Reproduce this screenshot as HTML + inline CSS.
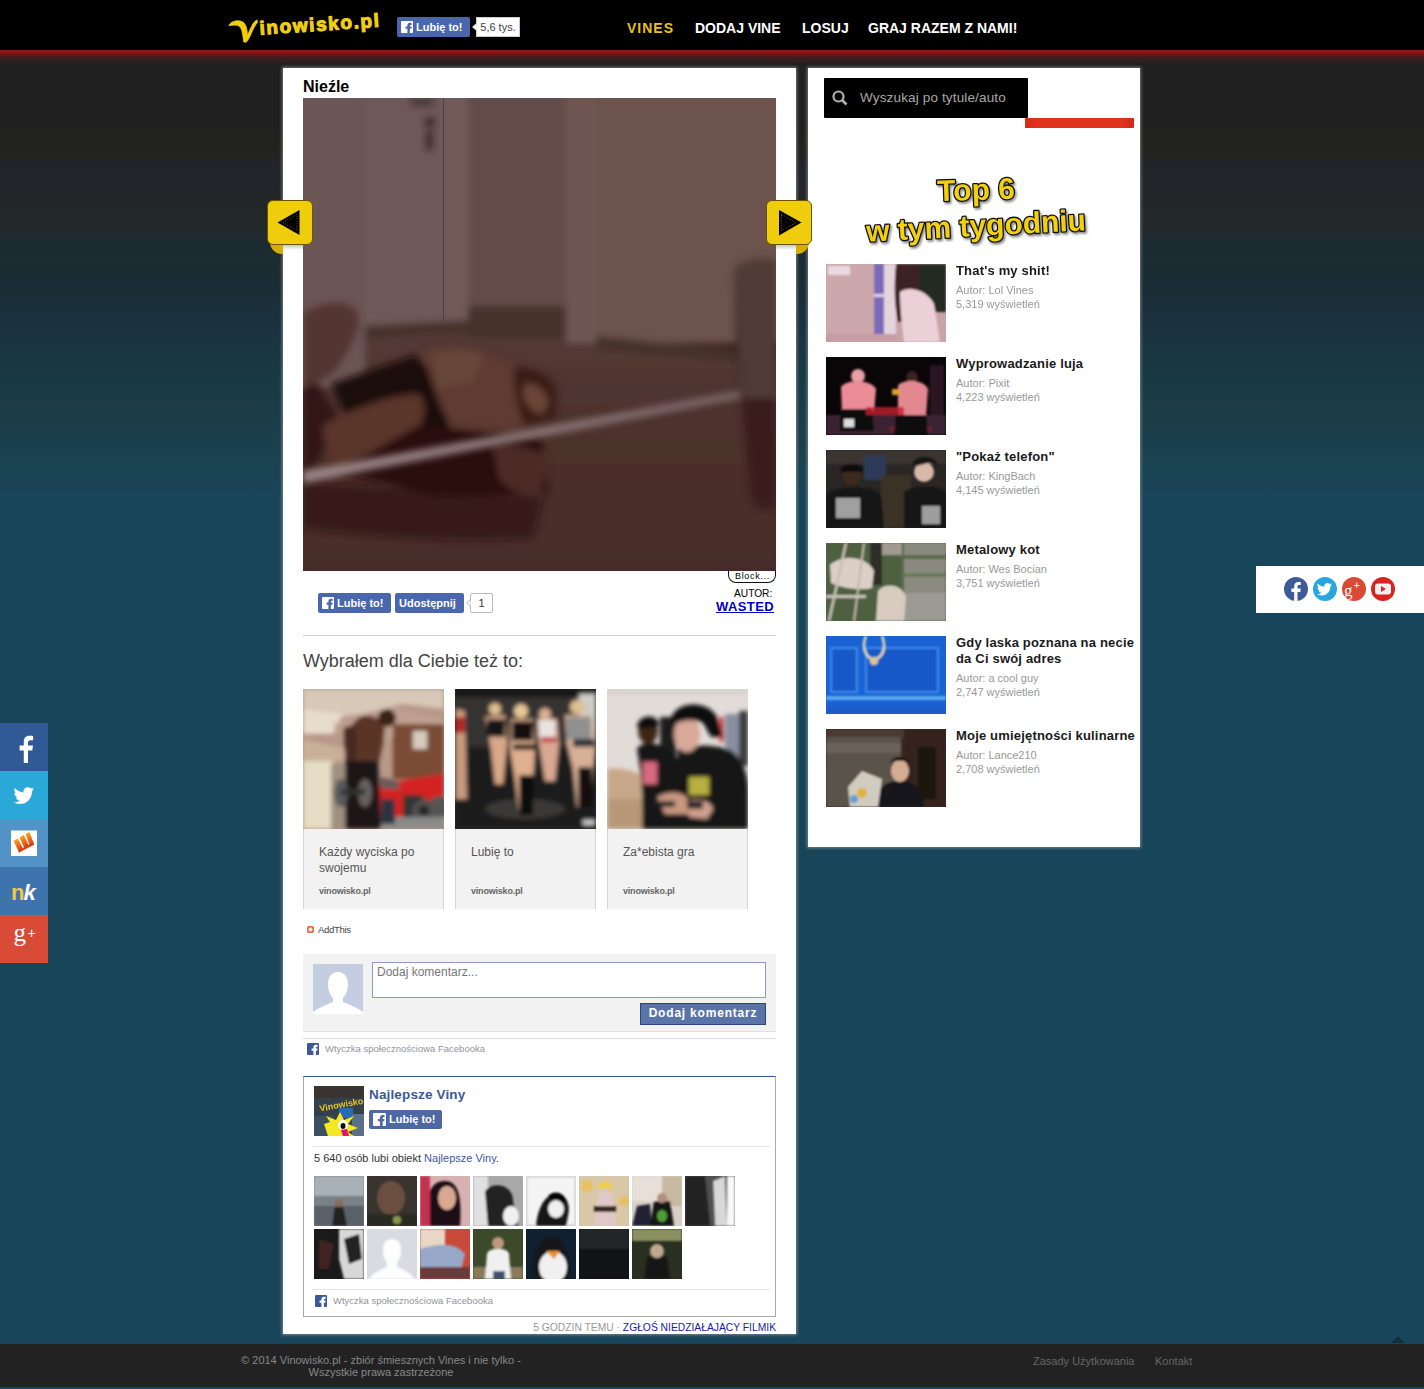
<!DOCTYPE html>
<html><head><meta charset="utf-8">
<style>
*{margin:0;padding:0;box-sizing:border-box}
html,body{width:1424px;height:1389px;overflow:hidden}
body{position:relative;font-family:"Liberation Sans",sans-serif;background:#1a465b;}
.abs{position:absolute}
#bg{position:absolute;left:0;top:0;width:1424px;height:1389px;background:linear-gradient(to bottom,#000 0,#000 49.5px,#8a1a1a 50px,#921010 52px,#7a1414 53.5px,#5a1a1c 55px,#3c1c1e 58px,#2c2220 61px,#232022 63px,#202020 65px,#202020 125px,#232420 159px,#22242a 160px,#222828 231px,#222a30 232px,#1c2b31 240px,#1a2c33 275px,#1a3240 330px,#193943 375px,#1b3d48 420px,#1a4250 460px,#19455a 497px,#19455a 100%)}
#hdr{position:absolute;left:0;top:0;width:1424px;height:50px}
.nav{position:absolute;top:20px;font-weight:bold;font-size:14px;color:#fff;line-height:16px;white-space:nowrap}
.box{position:absolute;background:#fff;box-shadow:0 0 3px 1px rgba(190,190,190,.55)}
.fbbtn{position:absolute;background:#4a66ad;border-radius:2px;color:#fff;font-weight:bold;font-size:11px;line-height:20px;white-space:nowrap}
.fbic{position:absolute;background:#fff;border-radius:1px}
.t{position:absolute;white-space:nowrap}
</style></head><body>
<div id="bg"></div>

<!-- header -->
<div id="hdr">
  <svg class="abs" style="left:220px;top:5px" width="175" height="42" viewBox="220 5 175 42">
<path d="M228.8,25.5 C231,21.5 236,20.2 240,21 C245,22 246.5,26 247.2,32 L247.4,36 C249.5,30 252,24.5 256.8,19.8 L257.6,22 C255,25.5 253,29.5 251,34 C249.5,37.5 248,40.5 246.2,42.2 L243.6,41.8 C243.2,37 242.5,32 241.2,28.8 C240,26 237.5,25 234.5,25.1 C232.5,25.2 230.5,25.6 228.8,25.5 Z" fill="#f0cf10" stroke="#f0cf10" stroke-width="0.8"/>
<path d="M251.2,25.8 C252.5,23.5 254.5,21.5 256.6,19.8 L255.5,23.5 Z" fill="#f0cf10"/>
<text x="260" y="34.7" font-family="Liberation Sans" font-weight="bold" font-size="19" letter-spacing="1.6" fill="#f0cf10" stroke="#f0cf10" stroke-width="1.1" stroke-linejoin="round" transform="rotate(-3.8 260 34.7)">inowisko.pl</text>
</svg>
  <div class="fbbtn" style="left:397px;top:17px;width:73px;height:20px"><svg class="abs" style="left:4px;top:4px" width="12" height="12" viewBox="0 0 12 12"><rect width="12" height="12" rx="1" fill="#fff"/><path d="M6.4,12 V7.7 H4.6 V5.6 H6.4 V4.4 C6.4,2.8 7.3,1.8 8.9,1.8 H10.6 V3.9 H9.4 C9.1,3.9 8.9,4.1 8.9,4.5 V5.6 H10.6 L10.3,7.7 H8.9 V12 Z" fill="#4a66ad"/></svg><span style="position:absolute;left:19px;top:0">Lubię to!</span></div>
  <div class="t" style="left:476px;top:17px;width:44px;height:20px;background:#fff;border:1px solid #ccc;font-size:11px;line-height:18px;color:#444;text-align:center">5,6 tys.</div><svg class="abs" style="left:472px;top:23px" width="5" height="8"><polygon points="5,0 0.5,4 5,8" fill="#fff" stroke="#ccc" stroke-width="1"/></svg>
  <div class="nav" style="left:627px;color:#e8c31c;letter-spacing:1px">VINES</div>
  <div class="nav" style="left:695px">DODAJ VINE</div>
  <div class="nav" style="left:802px">LOSUJ</div>
  <div class="nav" style="left:868px">GRAJ RAZEM Z NAMI!</div>
</div>

<!-- main box -->
<div class="box" style="left:283px;top:68px;width:513px;height:1266px"></div>
<!-- sidebar -->
<div class="box" style="left:808px;top:68px;width:332px;height:779px"></div>


<!-- MAIN CONTENT -->
<div class="t" style="left:303px;top:78px;font-size:16px;font-weight:bold;color:#000;line-height:18px">Nieźle</div>
<div class="abs" id="video" style="left:303px;top:98px;width:473px;height:473px;overflow:hidden;background:#3e221c">
<svg width="473" height="473" viewBox="0 0 473 473">
<defs>
<filter id="bl" x="-20%" y="-20%" width="140%" height="140%"><feGaussianBlur stdDeviation="3.5"/></filter>
<filter id="bl2" x="-30%" y="-30%" width="160%" height="160%"><feGaussianBlur stdDeviation="9"/></filter>
<linearGradient id="barg" x1="0" y1="0" x2="1" y2="0"><stop offset="0" stop-color="#9a8686"/><stop offset="1" stop-color="#7a6666"/></linearGradient>
<linearGradient id="fl" x1="0" y1="0" x2="0" y2="1"><stop offset="0" stop-color="#563c38"/><stop offset="0.5" stop-color="#4c302c"/><stop offset="1" stop-color="#462c2c"/></linearGradient>
</defs>
<rect x="0" y="0" width="473" height="473" fill="#3e221c"/>
<g filter="url(#bl)">
<rect x="-10" y="-10" width="72" height="300" fill="#6c5454"/>
<rect x="62" y="-10" width="81" height="245" fill="#6e5858"/>
<rect x="143" y="-10" width="22" height="238" fill="#725a58"/>
<rect x="165" y="-10" width="98" height="220" fill="#644c48"/>
<rect x="263" y="-10" width="30" height="255" fill="#705652"/>
<rect x="293" y="-10" width="190" height="255" fill="#6c524e"/>
<polygon points="-10,290 62,290 62,235 165,228 165,208 263,208 263,245 293,245 293,240 480,262 480,480 -10,480" fill="url(#fl)"/>
<polygon points="62,228 165,222 165,235 62,240" fill="#46302c"/>
<polygon points="165,208 263,208 263,240 165,240" fill="#45302a"/>
<polygon points="293,238 430,252 480,255 480,268 293,252" fill="#45302a"/>
</g>
<rect x="140" y="0" width="1" height="228" fill="#524040"/>
<g filter="url(#bl)">
<rect x="108" y="2" width="22" height="4" fill="#2a1c1c"/>
<circle cx="127" cy="24" r="5" fill="#3a2222"/>
<rect x="124" y="32" width="5" height="20" fill="#2a1a1a"/>
</g>
<g filter="url(#bl2)">


</g>
<g filter="url(#bl)">
<path d="M0,215 C15,205 45,200 54,214 C60,230 45,255 30,275 L14,285 L0,290 Z" fill="#533630"/>
<path d="M0,290 L14,285 C25,300 32,315 38,325 L10,370 L0,372 Z" fill="#321614"/>
<path d="M28,286 L112,257 L150,298 L142,345 L46,326 Z" fill="#1c0c0c"/>
<path d="M122,252 C145,246 170,248 185,256 C215,265 240,280 250,300 L245,318 L204,334 L150,330 C140,315 132,295 122,262 Z" fill="#5e3a32"/>
<path d="M128,256 C145,250 165,250 180,258 L170,285 L136,290 Z" fill="#684638"/>
<path d="M211,269 C230,268 248,276 254,292 L252,320 L221,327 C214,312 210,290 211,269 Z" fill="#3a1c18"/>
<path d="M222,286 C232,284 242,292 246,304 L240,316 C230,316 222,306 220,296 Z" fill="#6a4438"/>
<path d="M20,327 C50,310 90,296 116,296 C124,305 122,320 116,330 L34,370 C25,360 20,345 20,327 Z" fill="#5a3429"/>
<path d="M116,327 L238,340 L245,395 L136,398 L34,374 Z" fill="#2a0e0c"/>
<path d="M190,347 C210,345 240,352 245,360 L238,395 C220,398 204,392 196,380 Z" fill="#4e2c26"/>
<path d="M0,385 C60,388 140,392 240,400 L230,440 C160,445 80,440 0,430 Z" fill="#2e1614" opacity="0.7"/>
<path d="M431,172 C436,160 473,158 473,165 L473,408 C462,415 452,410 448,398 L433,250 Z" fill="#3a1c1a"/>
<path d="M431,172 C436,160 473,158 473,165 L473,300 L438,300 Z" fill="#503a36"/>
</g>
<g filter="url(#bl)">
<path d="M0,373 L436,293 L438,300 L0,385 Z" fill="url(#barg)"/>
</g>
</svg>
</div>
<div class="abs" style="left:728px;top:571px;width:48px;height:12px;background:#fff;border:1.5px solid #111;border-top:none;border-radius:0 0 8px 8px;font-size:9px;line-height:10px;letter-spacing:0.7px;text-align:center;color:#000;padding-left:1px">Block...</div>

<!-- prev/next -->
<div class="abs" style="left:270px;top:240px;width:13px;height:14px;background:#d6ad00;border-radius:0 0 0 12px"></div>
<div class="abs" style="left:283px;top:244px;width:20px;height:6px;background:linear-gradient(#bbb,#fff)"></div>
<div class="abs" style="left:267px;top:200px;width:46px;height:45px;background:#f0cd0c;border:1px solid #6a5400;border-radius:6px"></div>
<svg class="abs" style="left:267px;top:200px" width="46" height="45"><polygon points="10.5,22.5 32.5,10 32.5,35" fill="#000"/><polygon points="16,22.5 30,14.5 30,30.5" fill="#000" stroke="#6a5a10" stroke-width="1" stroke-dasharray="1,1.5"/></svg>
<div class="abs" style="left:796px;top:240px;width:13px;height:14px;background:#d6ad00;border-radius:0 0 12px 0"></div>
<div class="abs" style="left:776px;top:244px;width:20px;height:6px;background:linear-gradient(#bbb,#fff)"></div>
<div class="abs" style="left:766px;top:200px;width:46px;height:45px;background:#f0cd0c;border:1px solid #6a5400;border-radius:6px"></div>
<svg class="abs" style="left:766px;top:200px" width="46" height="45"><polygon points="13,10 35.5,22.5 13,35.5" fill="#000"/><polygon points="15.5,14.5 30,22.5 15.5,30.5" fill="#000" stroke="#6a5a10" stroke-width="1" stroke-dasharray="1,1.5"/></svg>

<!-- like/share row -->
<div class="fbbtn" style="left:318px;top:593px;width:73px;height:20px"><svg class="abs" style="left:4px;top:4px" width="12" height="12" viewBox="0 0 12 12"><rect width="12" height="12" rx="1" fill="#fff"/><path d="M6.4,12 V7.7 H4.6 V5.6 H6.4 V4.4 C6.4,2.8 7.3,1.8 8.9,1.8 H10.6 V3.9 H9.4 C9.1,3.9 8.9,4.1 8.9,4.5 V5.6 H10.6 L10.3,7.7 H8.9 V12 Z" fill="#4a66ad"/></svg><span style="position:absolute;left:19px;top:0">Lubię to!</span></div>
<div class="fbbtn" style="left:395px;top:593px;width:69px;height:20px"><span style="position:absolute;left:4px;top:0">Udostępnij</span></div>
<div class="t" style="left:470px;top:593px;width:23px;height:20px;border:1px solid #bbb;border-radius:2px;background:#fff;font-size:11px;line-height:18px;color:#333;text-align:center">1</div><svg class="abs" style="left:466px;top:599px" width="5" height="8"><polygon points="5,0 0.5,4 5,8" fill="#fff" stroke="#bbb" stroke-width="1"/></svg>
<div class="t" style="left:734px;top:588px;font-size:10.2px;line-height:12px;color:#000">AUTOR:</div>
<div class="t" style="left:716px;top:600px;font-size:13px;font-weight:bold;line-height:14px;color:#0000c8;text-decoration:underline;letter-spacing:0.4px">WASTED</div>
<div class="abs" style="left:303px;top:635px;width:473px;height:1px;background:#ccc"></div>

<div class="t" style="left:303px;top:651px;font-size:18px;line-height:21px;color:#444">Wybrałem dla Ciebie też to:</div>


<!-- related cards -->
<div class="abs" style="left:303px;top:689px;width:141px;height:220px;background:#f2f2f2;border:1px solid #d4d4d4;border-top:none;border-bottom:none"></div>
<div class="abs" style="left:455px;top:689px;width:141px;height:220px;background:#f2f2f2;border:1px solid #d4d4d4;border-top:none;border-bottom:none"></div>
<div class="abs" style="left:607px;top:689px;width:141px;height:220px;background:#f2f2f2;border:1px solid #d4d4d4;border-top:none;border-bottom:none"></div>
<svg class="abs" style="left:303px;top:689px" width="141" height="140" viewBox="0 0 141 140">
<defs><filter id="c1" x="-20%" y="-20%" width="140%" height="140%"><feGaussianBlur stdDeviation="2"/></filter></defs>
<rect width="141" height="140" fill="#b89888"/>
<g filter="url(#c1)">
<polygon points="0,0 141,0 141,20 100,15 60,25 20,30 0,20" fill="#d8c8b8"/>
<polygon points="0,20 40,25 30,45 0,45" fill="#e8dccc"/>
<polygon points="30,35 90,20 141,30 141,40 100,45 45,60" fill="#c0a090"/>
<polygon points="0,50 45,60 40,72 0,72" fill="#c8b098"/>
<rect x="90" y="35" width="51" height="55" fill="#7a4c34"/>
<rect x="110" y="42" width="14" height="18" fill="#d8ccc0"/>
<rect x="0" y="72" width="30" height="68" fill="#e6dcc4"/>
<rect x="28" y="75" width="14" height="65" fill="#a09080"/>
<polygon points="75,95 141,85 141,128 75,128" fill="#d42222"/>
<rect x="100" y="106" width="20" height="24" fill="#303030"/>
<circle cx="121" cy="122" r="12" fill="#505050"/><circle cx="121" cy="122" r="5" fill="#202020"/>
<circle cx="137" cy="118" r="11" fill="#555"/>
<rect x="75" y="128" width="66" height="12" fill="#8a8a88"/>
<rect x="78" y="110" width="14" height="25" fill="#2a3040"/>
<path d="M52,32 C58,26 68,25 75,30 L82,40 C80,55 78,65 75,75 L45,75 C42,60 40,45 52,32 Z" fill="#5a3426"/>
<circle cx="84" cy="29" r="9" fill="#3a2018"/>
<path d="M40,40 C45,35 52,35 54,45 L52,95 L44,95 Z" fill="#4a2a20"/>
<path d="M42,72 L75,72 L78,140 L42,140 Z" fill="#1a1616"/>
<ellipse cx="38" cy="104" rx="7" ry="14" fill="#5a5a5a"/>
<ellipse cx="62" cy="104" rx="7" ry="14" fill="#686060"/>
<rect x="38" y="100" width="24" height="6" fill="#333"/>
<path d="M76,88 L95,92 L97,100 L78,100 Z" fill="#6a5a5a"/>
</g>
</svg>
<svg class="abs" style="left:455px;top:689px" width="141" height="140" viewBox="0 0 141 140">
<rect width="141" height="140" fill="#2a2826"/>
<g filter="url(#c1)">
<rect x="0" y="0" width="141" height="8" fill="#121212"/>
<rect x="0" y="8" width="141" height="50" fill="#353230"/>
<rect x="124" y="5" width="17" height="60" fill="#d0ccc6"/>
<rect x="0" y="58" width="141" height="82" fill="#1e1c1c"/>
<ellipse cx="70" cy="120" rx="40" ry="10" fill="#3a3836"/>
<path d="M0,20 L10,22 L12,110 L0,110 Z" fill="#c89a80"/><rect x="0" y="28" width="10" height="16" fill="#b02828"/>
<circle cx="40" cy="20" r="6" fill="#e0c090"/>
<path d="M30,28 L50,26 L52,55 L48,95 L40,95 L36,60 Z" fill="#d8a888"/>
<rect x="32" y="30" width="18" height="18" fill="#151212"/>
<circle cx="66" cy="22" r="7" fill="#e8c898"/>
<path d="M56,30 L78,30 L80,60 L78,90 L76,125 L64,125 L60,90 L55,60 Z" fill="#e0b090"/>
<rect x="57" y="32" width="21" height="20" fill="#141010"/>
<rect x="58" y="55" width="22" height="6" fill="#1a1414"/>
<rect x="64" y="86" width="14" height="40" fill="#101010"/>
<circle cx="90" cy="25" r="6" fill="#d8b090"/>
<path d="M82,30 L102,30 L104,55 L100,92 L90,92 L84,55 Z" fill="#d8a890"/>
<rect x="84" y="31" width="16" height="18" fill="#e8e4e0"/><rect x="86" y="48" width="16" height="5" fill="#c03040"/>
<circle cx="122" cy="18" r="7" fill="#e0c090"/>
<path d="M110,26 L136,26 L141,55 L138,80 L136,118 L122,118 L118,80 L112,55 Z" fill="#d8b098"/>
<rect x="112" y="28" width="24" height="22" fill="#909090"/>
<rect x="118" y="50" width="22" height="8" fill="#2a3038"/>
<rect x="123" y="78" width="14" height="40" fill="#181010"/>
<rect x="128" y="131" width="12" height="5" fill="#ccc"/>
</g>
</svg>
<svg class="abs" style="left:607px;top:689px" width="141" height="140" viewBox="0 0 141 140">
<rect width="141" height="140" fill="#e2dcd8"/>
<g filter="url(#c1)">
<rect x="0" y="0" width="141" height="6" fill="#d8d2ce"/>
<rect x="118" y="25" width="14" height="65" fill="#8890a0"/>
<rect x="132" y="22" width="9" height="55" fill="#3a3a3a"/>
<rect x="112" y="28" width="5" height="25" fill="#c85050"/>
<rect x="53" y="28" width="16" height="45" fill="#1a1a1a"/>
<path d="M0,80 C15,78 30,82 40,90 L40,140 L0,140 Z" fill="#c8a88a"/>
<path d="M0,110 L45,110 L45,140 L0,140 Z" fill="#b89878"/>
<path d="M30,60 C35,52 50,52 58,60 L72,70 L78,140 L35,140 C36,115 35,85 30,60 Z" fill="#121212"/>
<ellipse cx="41" cy="42" rx="10" ry="13" fill="#3e2618"/>
<path d="M30,36 C33,26 48,24 52,34 L50,38 L32,40 Z" fill="#0e0e0e"/>
<rect x="36" y="73" width="14" height="22" fill="#d86a80"/>
<path d="M70,60 C80,55 110,55 125,62 C135,70 141,85 141,100 L141,140 L75,140 C74,110 72,80 70,60 Z" fill="#141414"/>
<ellipse cx="80" cy="45" rx="13" ry="18" fill="#d8a898"/>
<path d="M64,30 C68,12 100,10 110,28 L116,48 L104,48 L96,34 C88,30 76,30 66,36 Z" fill="#0c0c0c"/>
<rect x="82" y="88" width="20" height="18" fill="#b8b040"/>
<path d="M50,108 C60,102 72,102 80,108 L82,125 L58,125 Z" fill="#c89880"/>
<path d="M80,112 C92,108 104,112 106,120 L100,130 L82,128 Z" fill="#d0a090"/>
<rect x="46" y="112" width="22" height="6" fill="#1a1a22"/>
<rect x="80" y="112" width="16" height="8" fill="#222"/>
</g>
</svg>
<div class="t" style="left:319px;top:844px;font-size:12px;line-height:16px;color:#555">Każdy wyciska po<br>swojemu</div>
<div class="t" style="left:471px;top:844px;font-size:12px;line-height:16px;color:#555">Lubię to</div>
<div class="t" style="left:623px;top:844px;font-size:12px;line-height:16px;color:#555">Za*ebista gra</div>
<div class="t" style="left:319px;top:886px;font-size:9px;font-weight:bold;line-height:11px;color:#666;letter-spacing:-0.2px">vinowisko.pl</div>
<div class="t" style="left:471px;top:886px;font-size:9px;font-weight:bold;line-height:11px;color:#666;letter-spacing:-0.2px">vinowisko.pl</div>
<div class="t" style="left:623px;top:886px;font-size:9px;font-weight:bold;line-height:11px;color:#666;letter-spacing:-0.2px">vinowisko.pl</div>
<svg class="abs" style="left:307px;top:926px" width="7" height="7"><rect width="7" height="7" rx="2" fill="#e8603c"/><rect x="2.5" y="1.5" width="2" height="4" fill="#fff"/><rect x="1.5" y="2.5" width="4" height="2" fill="#fff"/></svg>
<div class="t" style="left:318px;top:924px;font-size:9.5px;line-height:11px;color:#444;letter-spacing:-0.3px">AddThis</div>

<!-- FB comments -->
<div class="abs" style="left:303px;top:954px;width:473px;height:78px;background:#f2f2f2;border-bottom:1px solid #e0e0e0"></div>
<div class="abs" style="left:303px;top:1038px;width:473px;height:1px;background:#ddd"></div>
<svg class="abs" style="left:313px;top:964px" width="50" height="50" viewBox="0 0 50 50"><rect width="50" height="50" fill="#c5cee0"/><path d="M25,8 C32,8 35,14 35,20 C35,26 33,31 30,34 L30,38 C38,41 46,45 50,48 L50,50 L0,50 L0,48 C4,45 12,41 20,38 L20,34 C17,31 15,26 15,20 C15,14 18,8 25,8 Z" fill="#fff"/></svg>
<div class="abs" style="left:372px;top:962px;width:394px;height:36px;background:#fff;border:1px solid #8d9bc0"></div>
<div class="t" style="left:377px;top:965px;font-size:12px;line-height:14px;color:#777">Dodaj komentarz...</div>
<div class="abs" style="left:640px;top:1003px;width:126px;height:22px;background:#5b74a8;border:1px solid #29447e;color:#fff;font-weight:bold;font-size:12px;line-height:19px;text-align:center;letter-spacing:0.8px">Dodaj komentarz</div>
<svg class="abs" style="left:307px;top:1043px" width="12" height="12" viewBox="0 0 12 12"><rect width="12" height="12" rx="1" fill="#3b5998"/><path d="M6.4,12 V7.7 H4.6 V5.6 H6.4 V4.4 C6.4,2.8 7.3,1.8 8.9,1.8 H10.6 V3.9 H9.4 C9.1,3.9 8.9,4.1 8.9,4.5 V5.6 H10.6 L10.3,7.7 H8.9 V12 Z" fill="#fff"/></svg>
<div class="t" style="left:325px;top:1043px;font-size:9.5px;line-height:12px;color:#90949c">Wtyczka społecznościowa Facebooka</div>

<!-- FB like box -->
<div class="abs" style="left:303px;top:1076px;width:473px;height:241px;border:1px solid #aaa;border-top:1px solid #315c99;background:#fff"></div>
<svg class="abs" style="left:314px;top:1086px" width="50" height="50" viewBox="0 0 50 50">
<defs><filter id="pl"><feGaussianBlur stdDeviation="0.7"/></filter></defs>
<rect width="50" height="50" fill="#34404c"/>
<g filter="url(#pl)">
<rect x="0" y="0" width="50" height="12" fill="#3a3630"/>
<rect x="25" y="22" width="14" height="10" fill="#2a6ab0"/>
<rect x="0" y="30" width="20" height="20" fill="#3a5060"/>
<rect x="38" y="28" width="12" height="22" fill="#5a7088"/>
<polygon points="14,50 10,38 16,36 12,30 22,34 26,26 30,34 40,30 34,38 44,42 34,46 40,50" fill="#f4e820"/>
<ellipse cx="29" cy="39" rx="5" ry="5" fill="#fff"/>
<ellipse cx="29" cy="40" rx="2.5" ry="3" fill="#111"/>
<polygon points="27,44 33,43 35,50 29,50" fill="#e8107a"/>
<text x="5" y="22" font-family="Liberation Sans" font-weight="bold" font-size="9" fill="#e8c820" transform="rotate(-10 25 18)">Vinowisko.pl</text>
</g>
</svg>
<div class="t" style="left:369px;top:1087px;font-size:13.5px;font-weight:bold;line-height:16px;color:#3b5998;letter-spacing:0.15px">Najlepsze Viny</div>
<div class="fbbtn" style="left:369px;top:1110px;width:73px;height:19px;line-height:19px;background:#4e69a2"><svg class="abs" style="left:4px;top:3px" width="13" height="13" viewBox="0 0 12 12"><rect width="12" height="12" rx="1" fill="#fff"/><path d="M6.4,12 V7.7 H4.6 V5.6 H6.4 V4.4 C6.4,2.8 7.3,1.8 8.9,1.8 H10.6 V3.9 H9.4 C9.1,3.9 8.9,4.1 8.9,4.5 V5.6 H10.6 L10.3,7.7 H8.9 V12 Z" fill="#4e69a2"/></svg><span style="position:absolute;left:20px;top:0">Lubię to!</span></div>
<div class="abs" style="left:313px;top:1146px;width:457px;height:1px;background:#e5e5e5"></div>
<div class="t" style="left:314px;top:1152px;font-size:11px;line-height:13px;color:#333">5 640 osób lubi obiekt <span style="color:#3b5998">Najlepsze Viny</span>.</div>
<div class="abs" style="left:313px;top:1289px;width:457px;height:1px;background:#e5e5e5"></div>
<svg class="abs" style="left:315px;top:1295px" width="12" height="12" viewBox="0 0 12 12"><rect width="12" height="12" rx="1" fill="#3b5998"/><path d="M6.4,12 V7.7 H4.6 V5.6 H6.4 V4.4 C6.4,2.8 7.3,1.8 8.9,1.8 H10.6 V3.9 H9.4 C9.1,3.9 8.9,4.1 8.9,4.5 V5.6 H10.6 L10.3,7.7 H8.9 V12 Z" fill="#fff"/></svg>
<div class="t" style="left:333px;top:1295px;font-size:9.5px;line-height:12px;color:#90949c">Wtyczka społecznościowa Facebooka</div>
<div class="t" style="left:525px;top:1321px;width:251px;text-align:right;font-size:10.3px;line-height:13px;color:#999">5 GODZIN TEMU · <span style="color:#1a1aa6">ZGŁOŚ NIEDZIAŁAJĄCY FILMIK</span></div>

<!-- avatars -->
<svg class="abs" style="left:314px;top:1176px" width="50" height="50" viewBox="0 0 50 50"><defs><filter id="a0"><feGaussianBlur stdDeviation="1.2"/></filter></defs><rect width="50" height="50" fill="#7a8288"/><g filter="url(#a0)"><rect y="0" width="50" height="20" fill="#a8b0b8"/><rect y="30" width="50" height="20" fill="#5a6068"/><path d="M18,50 L20,35 C20,28 30,28 30,35 L33,50 Z" fill="#202020"/><circle cx="25" cy="27" r="4" fill="#8a6a5a"/></g></svg>
<svg class="abs" style="left:367px;top:1176px" width="50" height="50" viewBox="0 0 50 50"><defs><filter id="a1"><feGaussianBlur stdDeviation="1.2"/></filter></defs><rect width="50" height="50" fill="#3a3430"/><g filter="url(#a1)"><ellipse cx="24" cy="22" rx="14" ry="17" fill="#6a5040"/><rect x="0" y="38" width="50" height="12" fill="#2a2a20"/><circle cx="30" cy="44" r="4" fill="#8a9a50"/></g></svg>
<svg class="abs" style="left:420px;top:1176px" width="50" height="50" viewBox="0 0 50 50"><defs><filter id="a2"><feGaussianBlur stdDeviation="1.2"/></filter></defs><rect width="50" height="50" fill="#d8b0b0"/><g filter="url(#a2)"><path d="M5,50 C5,20 10,5 25,5 C38,5 42,20 40,50 Z" fill="#1a1018"/><ellipse cx="27" cy="22" rx="9" ry="12" fill="#d8a890"/><rect x="0" y="0" width="10" height="50" fill="#c03050"/></g></svg>
<svg class="abs" style="left:473px;top:1176px" width="50" height="50" viewBox="0 0 50 50"><defs><filter id="a3"><feGaussianBlur stdDeviation="1.2"/></filter></defs><rect width="50" height="50" fill="#a8a8a8"/><g filter="url(#a3)"><rect x="0" y="0" width="15" height="50" fill="#e0e0e0"/><path d="M12,15 C20,5 40,8 40,25 L45,50 L15,50 Z" fill="#202020"/><ellipse cx="38" cy="40" rx="8" ry="10" fill="#f0f0f0"/></g></svg>
<svg class="abs" style="left:526px;top:1176px" width="50" height="50" viewBox="0 0 50 50"><defs><filter id="a4"><feGaussianBlur stdDeviation="1.2"/></filter></defs><rect width="50" height="50" fill="#f4f4f4"/><g filter="url(#a4)"><rect x="0.5" y="0.5" width="49" height="49" fill="none" stroke="#aaa"/><path d="M10,50 C12,30 20,18 30,18 C40,18 45,28 42,40 L40,50 Z" fill="#181818"/><path d="M22,20 C28,14 38,16 40,25 L30,28 Z" fill="#000"/><ellipse cx="30" cy="33" rx="8" ry="9" fill="#f0f0f0"/></g></svg>
<svg class="abs" style="left:579px;top:1176px" width="50" height="50" viewBox="0 0 50 50"><defs><filter id="a5"><feGaussianBlur stdDeviation="1.2"/></filter></defs><rect width="50" height="50" fill="#d8c8a8"/><g filter="url(#a5)"><circle cx="8" cy="10" r="6" fill="#e8c060"/><circle cx="45" cy="25" r="5" fill="#e8c060"/><path d="M15,50 L18,25 C20,10 32,10 34,25 L38,50 Z" fill="#e0c8c8"/><path d="M18,12 C22,3 32,3 34,14 L30,12 Z" fill="#f0d040"/><rect x="15" y="30" width="22" height="6" fill="#3a2a20"/></g></svg>
<svg class="abs" style="left:632px;top:1176px" width="50" height="50" viewBox="0 0 50 50"><defs><filter id="a6"><feGaussianBlur stdDeviation="1.2"/></filter></defs><rect width="50" height="50" fill="#d8d0c8"/><g filter="url(#a6)"><rect x="0" y="0" width="50" height="25" fill="#e8e0d8"/><rect x="30" y="0" width="20" height="30" fill="#c8b8a0"/><path d="M0,50 L5,30 L18,28 L20,50 Z" fill="#202030"/><path d="M18,50 L22,25 L38,25 L42,50 Z" fill="#181818"/><circle cx="30" cy="22" r="5" fill="#b09080"/><ellipse cx="30" cy="40" rx="5" ry="6" fill="#50a030"/></g></svg>
<svg class="abs" style="left:685px;top:1176px" width="50" height="50" viewBox="0 0 50 50"><defs><filter id="a7"><feGaussianBlur stdDeviation="1.2"/></filter></defs><rect width="50" height="50" fill="#505050"/><g filter="url(#a7)"><path d="M0,0 L20,0 L25,50 L0,50 Z" fill="#202020"/><path d="M28,5 L40,0 L42,50 L30,50 Z" fill="#d8d8d8"/><rect x="42" y="0" width="8" height="50" fill="#f8f8f8"/></g></svg>
<svg class="abs" style="left:314px;top:1229px" width="50" height="50" viewBox="0 0 50 50"><defs><filter id="a8"><feGaussianBlur stdDeviation="1.2"/></filter></defs><rect width="50" height="50" fill="#1a1a1a"/><g filter="url(#a8)"><path d="M25,0 L50,0 L50,50 L30,50 L25,30 Z" fill="#d8d8d8"/><path d="M30,10 L45,5 L48,30 L35,35 Z" fill="#202020"/><path d="M5,10 L20,15 L15,40 L5,40 Z" fill="#402020"/></g></svg>
<svg class="abs" style="left:367px;top:1229px" width="50" height="50" viewBox="0 0 50 50"><defs><filter id="a9"><feGaussianBlur stdDeviation="1.2"/></filter></defs><rect width="50" height="50" fill="#d8dbe2"/><g filter="url(#a9)"><path d="M25,10 C31,10 34,15 34,21 C34,27 32,31 30,34 L30,38 C37,41 44,44 48,50 L2,50 C6,44 13,41 20,38 L20,34 C18,31 16,27 16,21 C16,15 19,10 25,10 Z" fill="#fff"/></g></svg>
<svg class="abs" style="left:420px;top:1229px" width="50" height="50" viewBox="0 0 50 50"><defs><filter id="a10"><feGaussianBlur stdDeviation="1.2"/></filter></defs><rect width="50" height="50" fill="#c84a3a"/><g filter="url(#a10)"><rect x="0" y="0" width="25" height="50" fill="#e8d8c8"/><path d="M0,20 C15,15 35,12 45,25 L40,45 L0,50 Z" fill="#98a8c8"/><rect x="0" y="38" width="50" height="12" fill="#6a3a3a"/></g></svg>
<svg class="abs" style="left:473px;top:1229px" width="50" height="50" viewBox="0 0 50 50"><defs><filter id="a11"><feGaussianBlur stdDeviation="1.2"/></filter></defs><rect width="50" height="50" fill="#3a4a2a"/><g filter="url(#a11)"><rect x="0" y="38" width="50" height="12" fill="#8a7a5a"/><path d="M12,50 L14,25 C15,18 35,18 36,25 L38,50 Z" fill="#f0f0f0"/><circle cx="25" cy="14" r="6" fill="#c09a80"/><rect x="20" y="42" width="12" height="8" fill="#405070"/></g></svg>
<svg class="abs" style="left:526px;top:1229px" width="50" height="50" viewBox="0 0 50 50"><defs><filter id="a12"><feGaussianBlur stdDeviation="1.2"/></filter></defs><rect width="50" height="50" fill="#102030"/><g filter="url(#a12)"><path d="M8,50 C5,30 12,8 25,8 C38,8 45,30 42,50 Z" fill="#181818"/><ellipse cx="27" cy="38" rx="14" ry="16" fill="#f0f0f0"/><polygon points="20,22 34,22 28,30" fill="#e89030"/></g></svg>
<svg class="abs" style="left:579px;top:1229px" width="50" height="50" viewBox="0 0 50 50"><defs><filter id="a13"><feGaussianBlur stdDeviation="1.2"/></filter></defs><rect width="50" height="50" fill="#101414"/><g filter="url(#a13)"><rect y="0" width="50" height="20" fill="#202828"/></g></svg>
<svg class="abs" style="left:632px;top:1229px" width="50" height="50" viewBox="0 0 50 50"><defs><filter id="a14"><feGaussianBlur stdDeviation="1.2"/></filter></defs><rect width="50" height="50" fill="#2a3020"/><g filter="url(#a14)"><rect x="0" y="0" width="50" height="12" fill="#8a9060"/><path d="M12,50 L15,30 C18,22 32,22 35,30 L38,50 Z" fill="#181818"/><circle cx="25" cy="22" r="7" fill="#c0a890"/></g></svg>

<!-- SIDEBAR -->
<div class="abs" style="left:824px;top:78px;width:204px;height:40px;background:#000;border-radius:1px"></div>
<svg class="abs" style="left:830px;top:88px" width="22" height="22" viewBox="0 0 22 22"><circle cx="8.5" cy="8.5" r="5" fill="none" stroke="#b0b0b0" stroke-width="2.2"/><line x1="12" y1="12" x2="16.5" y2="16.5" stroke="#b0b0b0" stroke-width="2.6"/></svg>
<div class="t" style="left:860px;top:90px;font-size:13.5px;line-height:16px;color:#a8a8a8;letter-spacing:0.15px">Wyszukaj po tytule/auto</div>
<div class="abs" style="left:1025px;top:118px;width:109px;height:10px;background:linear-gradient(to right,#d42a18,#e0321e 10%,#e0321e 90%,#d02818);border-radius:1px"></div>
<svg class="abs" style="left:850px;top:165px" width="250" height="90" viewBox="0 0 250 90">
<defs><filter id="ts" x="-10%" y="-10%" width="120%" height="130%"><feDropShadow dx="1.5" dy="2" stdDeviation="1" flood-color="#000" flood-opacity="0.45"/></filter></defs>
<g filter="url(#ts)" font-family="Liberation Sans" font-weight="bold" fill="#f2d00a" stroke="#111" stroke-width="2.6" stroke-linejoin="round" paint-order="stroke" text-anchor="middle">
<text x="126" y="35" font-size="30" transform="rotate(-2 126 25)">Top 6</text>
<text x="126" y="71" font-size="30" transform="rotate(-3 126 60)">w tym tygodniu</text>
</g>
</svg>
<svg class="abs" style="left:826px;top:264px" width="120" height="78" viewBox="0 0 120 78"><defs><filter id="sb0" x="-10%" y="-10%" width="120%" height="120%"><feGaussianBlur stdDeviation="1.3"/></filter><clipPath id="sc0"><rect width="120" height="78"/></clipPath></defs><g clip-path="url(#sc0)"><rect width="120" height="78" fill="#c8a4a8"/><g filter="url(#sb0)"><rect x="0" y="0" width="48" height="78" fill="#cca8ac"/><rect x="48" y="0" width="10" height="72" fill="#7a6ab8"/><rect x="48" y="30" width="10" height="3" fill="#e0d0e0"/><rect x="58" y="0" width="12" height="78" fill="#e4d4dc"/><rect x="92" y="0" width="28" height="48" fill="#222a22"/><path d="M70,0 L92,0 C95,15 94,35 90,55 L72,58 C68,40 68,20 70,0 Z" fill="#3e2424"/><path d="M74,28 C82,22 100,25 108,40 L114,78 L78,78 C76,60 74,45 74,28 Z" fill="#ecd0d8"/><rect x="2" y="2" width="22" height="9" fill="#e8dce0"/><rect x="0" y="70" width="70" height="8" fill="#c89ca4"/></g></g></svg>
<div class="t" style="left:956px;top:263px;font-size:13px;font-weight:bold;line-height:16px;color:#1a1a1a;letter-spacing:0.18px">That's my shit!</div>
<div class="t" style="left:956px;top:283px;font-size:11px;line-height:14px;color:#999">Autor: Lol Vines<br>5,319 wyświetleń</div>
<svg class="abs" style="left:826px;top:357px" width="120" height="78" viewBox="0 0 120 78"><defs><filter id="sb1" x="-10%" y="-10%" width="120%" height="120%"><feGaussianBlur stdDeviation="1.3"/></filter><clipPath id="sc1"><rect width="120" height="78"/></clipPath></defs><g clip-path="url(#sc1)"><rect width="120" height="78" fill="#0a0608"/><g filter="url(#sb1)"><rect x="0" y="58" width="120" height="20" fill="#3a2030"/><ellipse cx="85" cy="72" rx="22" ry="5" fill="#6a2030"/><rect x="104" y="8" width="14" height="50" fill="#2a1820"/><circle cx="32" cy="19" r="7" fill="#e8a0a8"/><path d="M15,30 C20,22 45,22 50,32 L48,55 L16,55 Z" fill="#ec8c98"/><path d="M14,52 L46,52 L48,74 L14,74 Z" fill="#101010"/><rect x="18" y="62" width="10" height="8" fill="#ddd"/><circle cx="86" cy="20" r="6" fill="#3a2020"/><path d="M72,28 C78,22 98,22 102,32 L100,60 L72,60 Z" fill="#e48890"/><rect x="66" y="32" width="8" height="6" fill="#e0a030"/><path d="M70,58 L100,58 L102,78 L68,78 Z" fill="#111"/><rect x="40" y="50" width="38" height="8" fill="#c02030" opacity="0.8"/></g></g></svg>
<div class="t" style="left:956px;top:356px;font-size:13px;font-weight:bold;line-height:16px;color:#1a1a1a;letter-spacing:0.18px">Wyprowadzanie luja</div>
<div class="t" style="left:956px;top:376px;font-size:11px;line-height:14px;color:#999">Autor: Pixit<br>4,223 wyświetleń</div>
<svg class="abs" style="left:826px;top:450px" width="120" height="78" viewBox="0 0 120 78"><defs><filter id="sb2" x="-10%" y="-10%" width="120%" height="120%"><feGaussianBlur stdDeviation="1.3"/></filter><clipPath id="sc2"><rect width="120" height="78"/></clipPath></defs><g clip-path="url(#sc2)"><rect width="120" height="78" fill="#2a2624"/><g filter="url(#sb2)"><rect x="0" y="0" width="120" height="14" fill="#3a3430"/><rect x="38" y="6" width="22" height="24" fill="#2e3a58"/><rect x="55" y="25" width="30" height="53" fill="#3a3028"/><circle cx="26" cy="26" r="9" fill="#3e2a1e"/><path d="M14,20 C16,12 36,12 38,20 L36,22 L16,22 Z" fill="#0e0e0e"/><path d="M0,45 C5,36 45,34 55,45 L58,78 L0,78 Z" fill="#141414"/><rect x="10" y="48" width="24" height="20" fill="#cfcfcf" opacity="0.75"/><circle cx="98" cy="22" r="10" fill="#d8b8a8"/><path d="M86,14 C90,4 110,4 112,16 L106,12 L90,16 Z" fill="#181412"/><path d="M78,42 C85,35 115,35 120,42 L120,78 L78,78 Z" fill="#121212"/><rect x="96" y="56" width="18" height="18" fill="#d8d8d8" opacity="0.7"/></g></g></svg>
<div class="t" style="left:956px;top:449px;font-size:13px;font-weight:bold;line-height:16px;color:#1a1a1a;letter-spacing:0.18px">"Pokaż telefon"</div>
<div class="t" style="left:956px;top:469px;font-size:11px;line-height:14px;color:#999">Autor: KingBach<br>4,145 wyświetleń</div>
<svg class="abs" style="left:826px;top:543px" width="120" height="78" viewBox="0 0 120 78"><defs><filter id="sb3" x="-10%" y="-10%" width="120%" height="120%"><feGaussianBlur stdDeviation="1.3"/></filter><clipPath id="sc3"><rect width="120" height="78"/></clipPath></defs><g clip-path="url(#sc3)"><rect width="120" height="78" fill="#5a6a48"/><g filter="url(#sb3)"><rect x="0" y="0" width="75" height="78" fill="#4e6040"/><rect x="78" y="0" width="42" height="50" fill="#8a8a80"/><rect x="78" y="12" width="42" height="4" fill="#5a6a48"/><rect x="78" y="30" width="42" height="4" fill="#6a7a58"/><rect x="78" y="50" width="42" height="28" fill="#9c9a92"/><rect x="44" y="0" width="12" height="42" fill="#2e2e26"/><rect x="56" y="0" width="20" height="12" fill="#a09a90"/><path d="M4,22 C15,12 40,12 48,28 L46,45 C35,48 15,45 5,40 Z" fill="#dccfc4"/><path d="M52,48 C60,38 78,42 80,55 L78,78 L50,78 Z" fill="#d8ccc0"/><line x1="3" y1="78" x2="20" y2="0" stroke="#c8c0b8" stroke-width="2.5"/><line x1="28" y1="78" x2="38" y2="0" stroke="#c0b8b0" stroke-width="2"/><rect x="0" y="52" width="40" height="3" fill="#c8c0b8"/></g></g></svg>
<div class="t" style="left:956px;top:542px;font-size:13px;font-weight:bold;line-height:16px;color:#1a1a1a;letter-spacing:0.18px">Metalowy kot</div>
<div class="t" style="left:956px;top:562px;font-size:11px;line-height:14px;color:#999">Autor: Wes Bocian<br>3,751 wyświetleń</div>
<svg class="abs" style="left:826px;top:636px" width="120" height="78" viewBox="0 0 120 78"><defs><filter id="sb4" x="-10%" y="-10%" width="120%" height="120%"><feGaussianBlur stdDeviation="1.3"/></filter><clipPath id="sc4"><rect width="120" height="78"/></clipPath></defs><g clip-path="url(#sc4)"><rect width="120" height="78" fill="#1a62d4"/><g filter="url(#sb4)"><rect x="5" y="12" width="26" height="44" fill="#1658c8" stroke="#3a8ae8" stroke-width="2"/><rect x="40" y="12" width="72" height="44" fill="#1658c8" stroke="#3a8ae8" stroke-width="2"/><rect x="0" y="60" width="120" height="4" fill="#5aaaf0"/><rect x="0" y="70" width="120" height="8" fill="#1a5cc8"/><path d="M40,0 C36,10 38,18 44,22 L48,25 L52,22 C58,18 60,10 56,0" fill="none" stroke="#e8dcb0" stroke-width="2.5"/><circle cx="48" cy="25" r="4" fill="#d8c890"/></g></g></svg>
<div class="t" style="left:956px;top:635px;font-size:13px;font-weight:bold;line-height:16px;color:#1a1a1a;letter-spacing:0.18px">Gdy laska poznana na necie<br>da Ci swój adres</div>
<div class="t" style="left:956px;top:671px;font-size:11px;line-height:14px;color:#999">Autor: a cool guy<br>2,747 wyświetleń</div>
<svg class="abs" style="left:826px;top:729px" width="120" height="78" viewBox="0 0 120 78"><defs><filter id="sb5" x="-10%" y="-10%" width="120%" height="120%"><feGaussianBlur stdDeviation="1.3"/></filter><clipPath id="sc5"><rect width="120" height="78"/></clipPath></defs><g clip-path="url(#sc5)"><rect width="120" height="78" fill="#3a2a20"/><g filter="url(#sb5)"><rect x="0" y="0" width="120" height="8" fill="#4a3a30"/><rect x="0" y="8" width="75" height="70" fill="#5a524a"/><rect x="0" y="14" width="75" height="10" fill="#6a625a"/><rect x="78" y="0" width="42" height="78" fill="#35241a"/><rect x="92" y="18" width="18" height="52" fill="#1e140e"/><path d="M50,78 C50,58 60,52 74,52 C88,52 98,60 98,78 Z" fill="#16181c"/><ellipse cx="74" cy="42" rx="9" ry="11" fill="#d4ac94"/><path d="M64,34 C66,26 82,26 84,34 L80,32 L68,32 Z" fill="#1e1616"/><path d="M22,58 L36,42 L56,50 L52,78 L24,78 Z" fill="#d0ccc0"/><circle cx="36" cy="64" r="5" fill="#e0b040"/><circle cx="28" cy="70" r="4" fill="#60a0d0"/></g></g></svg>
<div class="t" style="left:956px;top:728px;font-size:13px;font-weight:bold;line-height:16px;color:#1a1a1a;letter-spacing:0.18px">Moje umiejętności kulinarne</div>
<div class="t" style="left:956px;top:748px;font-size:11px;line-height:14px;color:#999">Autor: Lance210<br>2,708 wyświetleń</div>


<!-- left share bar -->
<div class="abs" style="left:0;top:723px;width:48px;height:48px;background:#305a96"></div>
<div class="abs" style="left:0;top:771px;width:48px;height:48px;background:#2aa8d8"></div>
<div class="abs" style="left:0;top:819px;width:48px;height:48px;background:#5392c6"></div>
<div class="abs" style="left:0;top:867px;width:48px;height:48px;background:#3e74ad"></div>
<div class="abs" style="left:0;top:915px;width:48px;height:48px;background:#d74b37"></div>
<svg class="abs" style="left:0;top:723px" width="48" height="240" viewBox="0 0 48 240">
<path d="M28,40 V27.5 H32.3 L33,22.6 H28 V19.6 C28,18.2 28.5,17.2 30.5,17.2 H33.1 V13 C32.6,12.9 31.1,12.8 29.400,12.800 C25.800,12.800 23.800,15 23.800,18.800 V22.6 H19.6 V27.5 H23.800 V40 Z" fill="#fff"/>
<path d="M34,66 C33.2,66.4 32.4,66.6 31.6,66.7 C32.5,66.2 33.1,65.4 33.4,64.5 C32.6,65 31.7,65.3 30.8,65.5 C30,64.7 28.9,64.2 27.7,64.2 C25.4,64.2 23.5,66.1 23.5,68.4 C23.5,68.7 23.5,69.1 23.6,69.4 C20.1,69.2 17,67.5 14.9,65 C14.5,65.6 14.3,66.4 14.3,67.1 C14.3,68.6 15.1,69.9 16.2,70.6 C15.5,70.6 14.9,70.4 14.300,70.1 C14.3,72.2 15.8,73.9 17.700,74.300 C17.3,74.400 17,74.5 16.600,74.5 C16.300,74.5 16.100,74.5 15.800,74.4 C16.300,76.1 17.900,77.3 19.700,77.400 C18.300,78.500 16.500,79.200 14.500,79.200 C14.200,79.200 13.800,79.200 13.500,79.100 C15.300,80.300 17.500,81 19.900,81 C27.700,81 31.900,74.500 31.900,68.900 L31.900,68.300 C32.700,67.700 33.400,66.900 34,66 Z" fill="#fff" transform="translate(0,0)"/>
<rect x="11" y="107.5" width="26" height="25.5" fill="#fff"/>
<defs><linearGradient id="wk" x1="0" y1="0" x2="0.4" y2="1"><stop offset="0" stop-color="#f8b828"/><stop offset="1" stop-color="#e03810"/></linearGradient></defs>
<polygon points="13.5,118 17.8,115.5 23.5,126.5 19.2,129.5" fill="url(#wk)"/>
<polygon points="19.5,114.5 23.8,112 29,123 24.8,126" fill="url(#wk)"/>
<polygon points="25.5,111 29.5,109 34.2,121.5 30.2,123.5" fill="url(#wk)"/>
<polygon points="19.2,129.5 34.2,121.5 33,119.5 18,127.5" fill="#e04018"/>
<text x="11" y="177" font-family="Liberation Sans" font-weight="bold" font-size="22" fill="#f0c848">n</text>
<text x="23.5" y="177" font-family="Liberation Sans" font-weight="bold" font-style="italic" font-size="22" fill="#fff">k</text>
<text x="13.5" y="218" font-family="Liberation Serif" font-size="25" fill="#fff">g</text>
<text x="27.5" y="214.5" font-family="Liberation Sans" font-size="14" fill="#fff">+</text>
</svg>

<!-- right social box -->
<div class="abs" style="left:1256px;top:566px;width:168px;height:47px;background:#fff"></div>
<svg class="abs" style="left:1256px;top:566px" width="168" height="47" viewBox="0 0 168 47">
<circle cx="40" cy="23" r="12" fill="#3d5b99"/>
<path d="M41.5,35 V26 H44.3 L44.7,22.6 H41.5 V20.6 C41.5,19.6 41.8,19 43.2,19 H44.8 V16 C44.5,16 43.5,15.9 42.3,15.9 C39.9,15.9 38.2,17.4 38.2,20.100 V22.6 H35.4 V26 H38.2 V35 Z" fill="#fff"/>
<circle cx="69" cy="23" r="12" fill="#2aa6de"/>
<path d="M76,18.5 C75.4,18.8 74.8,18.9 74.200,19 C74.800,18.600 75.300,18 75.500,17.300 C74.900,17.700 74.300,17.900 73.600,18 C73,17.400 72.200,17 71.300,17 C69.600,17 68.200,18.400 68.200,20.100 C68.200,20.400 68.200,20.600 68.300,20.800 C65.700,20.700 63.400,19.500 61.900,17.600 C61.600,18.100 61.500,18.600 61.500,19.200 C61.500,20.300 62,21.200 62.900,21.800 C62.400,21.800 61.900,21.600 61.500,21.400 C61.500,22.900 62.600,24.200 64,24.500 C63.700,24.600 63.500,24.600 63.200,24.600 C63,24.600 62.800,24.600 62.600,24.500 C63,25.800 64.200,26.700 65.500,26.700 C64.400,27.500 63.100,28 61.700,28 L61,28 C62.400,28.900 64,29.400 65.700,29.400 C71.300,29.400 74.400,24.800 74.400,20.700 L74.400,20.300 C75,19.800 75.500,19.200 76,18.500 Z" fill="#fff"/>
<circle cx="98" cy="23" r="12" fill="#d84a35"/>
<text x="88" y="29.5" font-family="Liberation Serif" font-size="17" fill="#fff">g</text>
<text x="97.5" y="23" font-family="Liberation Sans" font-size="11" fill="#fff">+</text>
<circle cx="127" cy="23" r="12" fill="#d8231e"/>
<rect x="119" y="17.5" width="16" height="11" rx="3" fill="#f0f0f0"/>
<polygon points="125,20 125,26 130,23" fill="#d8231e"/>
</svg>

<!-- footer -->
<div class="abs" style="left:0;top:1344px;width:1424px;height:43px;background:#222"></div>


<div class="t" style="left:221px;top:1354px;width:320px;text-align:center;font-size:11px;line-height:12px;color:#888">© 2014 Vinowisko.pl - zbiór śmiesznych Vines i nie tylko -<br>Wszystkie prawa zastrzeżone</div>
<div class="t" style="left:1033px;top:1354px;font-size:11px;line-height:14px;color:#666">Zasady Użytkowania</div>
<div class="t" style="left:1155px;top:1354px;font-size:11px;line-height:14px;color:#666">Kontakt</div>
<svg class="abs" style="left:1391px;top:1336px" width="14" height="7"><polygon points="0,7 7,0 14,7" fill="#10303e"/></svg>

</body></html>
